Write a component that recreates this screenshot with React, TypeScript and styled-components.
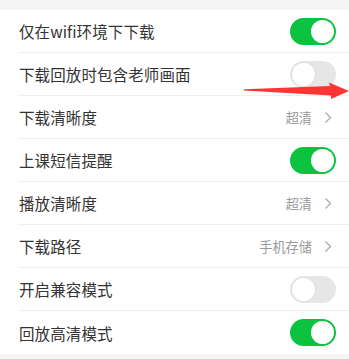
import styled, { createGlobalStyle } from "styled-components"

const GlobalStyle = createGlobalStyle`
  html, body {
    margin: 0;
    padding: 0;
    background: #f5f5f5;
  }
  body {
    font-family: "Noto Sans CJK SC", "Noto Sans", sans-serif;
    -webkit-font-smoothing: antialiased;
  }
`

const Page = styled.div`
  position: relative;
  width: 349px;
  height: 359px;
  overflow: hidden;
  background: #f5f5f5;
  padding-top: 10px;
  box-sizing: border-box;
`

const List = styled.div`
  background: #fff;
`

const Row = styled.div<{ $last?: boolean }>`
  display: flex;
  align-items: center;
  justify-content: space-between;
  height: 43px;
  box-sizing: border-box;
  margin-left: 18px;
  padding: 0 13px 0 1px;
  border-bottom: ${(p) => (p.$last ? "none" : "1px solid #efefef")};
`

const Label = styled.span`
  font-size: 15.5px;
  color: #333;
  letter-spacing: 0.1px;
`

const ValueGroup = styled.div`
  display: flex;
  align-items: center;
  gap: 12px;
  padding-right: 4px;
`

const Value = styled.span`
  font-size: 13.2px;
  color: #9a9a9a;
`

const Switch = styled.div<{ $on: boolean }>`
  position: relative;
  width: 46px;
  height: 27px;
  border-radius: 14px;
  box-sizing: border-box;
  background: ${(p) => (p.$on ? "#0bc241" : "#e6e6e6")};
  &::after {
    content: "";
    position: absolute;
    top: 2px;
    left: ${(p) => (p.$on ? "21px" : "2px")};
    width: 23px;
    height: 23px;
    border-radius: 50%;
    background: #fff;
    box-shadow: ${(p) => (p.$on ? "none" : "0 0 0 0.8px #dcdcdc")};
  }
`

const Arrow = styled.svg`
  position: absolute;
  left: 0;
  top: 0;
  pointer-events: none;
`

function Chevron() {
  return (
    <svg width="8" height="13" viewBox="0 0 8 13">
      <polyline points="1.5,1.5 6.5,6.5 1.5,11.5" fill="none" stroke="#aaa" strokeWidth="1.3" />
    </svg>
  )
}

type Item =
  | { label: string; kind: "switch"; on: boolean }
  | { label: string; kind: "link"; value: string }

const items: Item[] = [
  { label: "仅在wifi环境下下载", kind: "switch", on: true },
  { label: "下载回放时包含老师画面", kind: "switch", on: false },
  { label: "下载清晰度", kind: "link", value: "超清" },
  { label: "上课短信提醒", kind: "switch", on: true },
  { label: "播放清晰度", kind: "link", value: "超清" },
  { label: "下载路径", kind: "link", value: "手机存储" },
  { label: "开启兼容模式", kind: "switch", on: false },
  { label: "回放高清模式", kind: "switch", on: true },
]

export default function App() {
  return (
    <>
      <GlobalStyle />
      <Page>
        <List>
          {items.map((it, i) => (
            <Row key={it.label} $last={i === items.length - 1}>
              <Label>{it.label}</Label>
              {it.kind === "switch" ? (
                <Switch $on={it.on} />
              ) : (
                <ValueGroup>
                  <Value>{it.value}</Value>
                  <Chevron />
                </ValueGroup>
              )}
            </Row>
          ))}
        </List>
        {/* red annotation arrow */}
        <Arrow width="349" height="359" viewBox="0 0 349 359">
          <polygon
            points="244,89.2 330,86 329,82.5 349,91 331,99 331,95.5 244,90.6"
            fill="#ff3535"
          />
        </Arrow>
      </Page>
    </>
  )
}
